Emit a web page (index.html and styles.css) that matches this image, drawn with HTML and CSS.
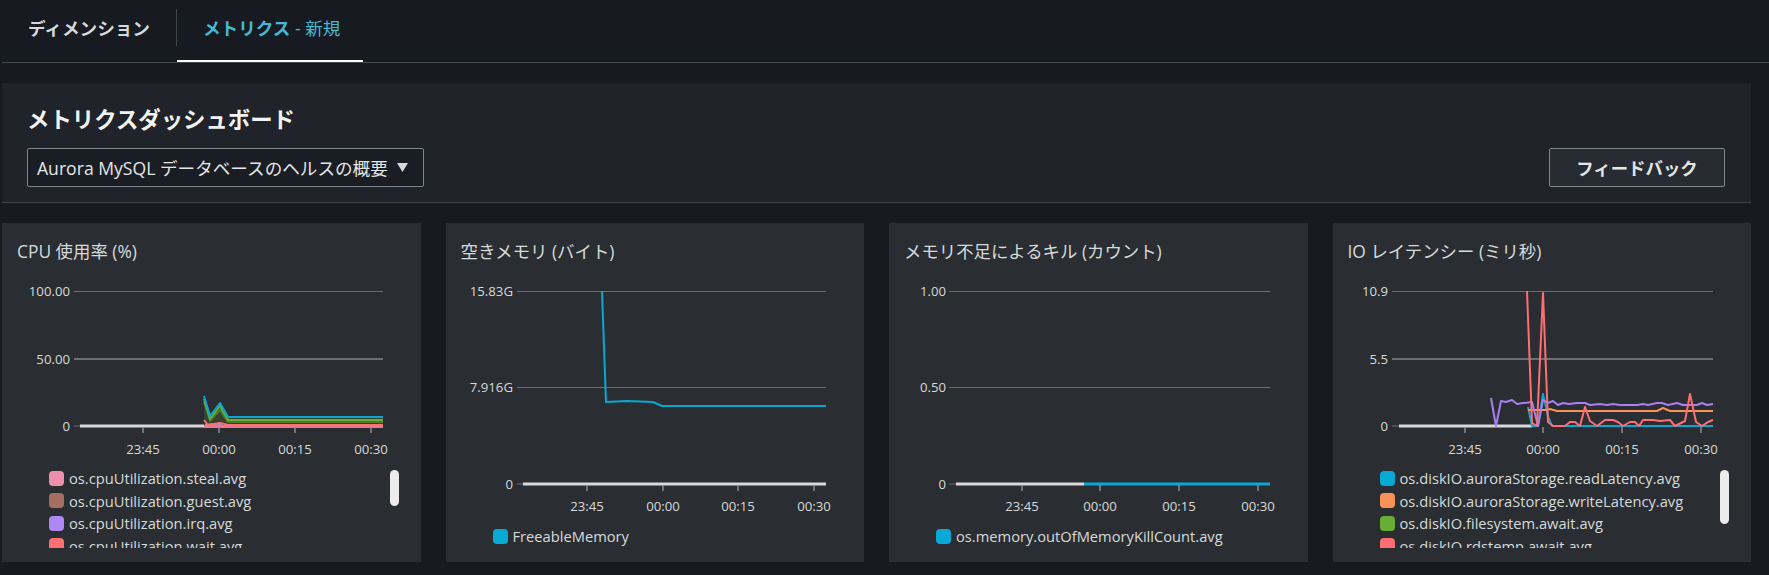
FILE: index.html
```html
<!DOCTYPE html>
<html lang="ja">
<head>
<meta charset="utf-8">
<title>メトリクスダッシュボード</title>
<link rel="stylesheet" href="styles.css">
</head>
<body>
<div class="page">
  <nav class="tabs">
    <div class="tab">ディメンション</div>
    <div class="tab-sep"></div>
    <div class="tab active"><span>メトリクス</span><span class="tab-new">&nbsp;- 新規</span></div>
  </nav>

  <section class="dash-head">
    <h1 class="dash-title">メトリクスダッシュボード</h1>
    <div class="dash-controls">
      <div class="select">
        <span>Aurora MySQL データベースのヘルスの概要</span>
        <svg class="caret" width="11" height="9" viewBox="0 0 11 9"><polygon points="0,0 11,0 5.5,9"/></svg>
      </div>
      <button class="btn">フィードバック</button>
    </div>
  </section>

  <div class="cards">
    <!-- CPU -->
    <div class="card">
      <div class="card-title">CPU 使用率 (%)</div>
      <svg class="chart" width="419" height="203" viewBox="0 0 419 203">
        <line class="grid" x1="72" y1="27.5" x2="381" y2="27.5"/>
        <line class="grid grid-mid" x1="72" y1="95" x2="381" y2="95"/>
        <line class="grid" x1="72" y1="162" x2="78" y2="162"/>
        <g class="ylab">
          <text x="68" y="31.5">100.00</text>
          <text x="68" y="99.5">50.00</text>
          <text x="68" y="166.5">0</text>
        </g>
        <line class="zero" x1="78" y1="162" x2="203" y2="162"/>
        <polygon class="area" points="202,132 208,152 218,139 226,153 381,153 381,162 202,162"/>
        <polyline class="s-green-dark" points="202,138 208,157 218,146 226,158 381,158"/>
        <polyline class="s-green" points="202,135 208,155 218,142 226,156 381,156"/>
        <polyline class="s-blue" points="202,132 208,152 218,139 226,153 381,153"/>
        <polyline class="s-purple" points="203,161 212,160 220,161"/>
        <polyline class="s-red" points="202,156 206,161 218,159 226,161 381,161"/>
        <line class="s-pink" x1="202" y1="162.5" x2="381" y2="162.5"/>
        <g class="ticks">
          <line x1="141" y1="163" x2="141" y2="169"/>
          <line x1="217" y1="163" x2="217" y2="169"/>
          <line x1="293" y1="163" x2="293" y2="169"/>
          <line x1="369" y1="163" x2="369" y2="169"/>
        </g>
        <g class="xlab">
          <text x="141" y="189.5">23:45</text>
          <text x="217" y="189.5">00:00</text>
          <text x="293" y="189.5">00:15</text>
          <text x="369" y="189.5">00:30</text>
        </g>
      </svg>
      <div class="legend-wrap scroll">
        <ul class="legend">
          <li><i class="sw sw-pink"></i>os.cpuUtilization.steal.avg</li>
          <li><i class="sw sw-brown"></i>os.cpuUtilization.guest.avg</li>
          <li><i class="sw sw-purple"></i>os.cpuUtilization.irq.avg</li>
          <li><i class="sw sw-red"></i>os.cpuUtilization.wait.avg</li>
          <li><i class="sw sw-green"></i>os.cpuUtilization.system.avg</li>
        </ul>
        <div class="thumb thumb-cpu"></div>
      </div>
    </div>

    <!-- Freeable memory -->
    <div class="card">
      <div class="card-title">空きメモリ (バイト)</div>
      <svg class="chart" width="418" height="261" viewBox="0 0 418 261">
        <line class="grid" x1="71" y1="27.5" x2="380" y2="27.5"/>
        <line class="grid" x1="71" y1="123.5" x2="380" y2="123.5"/>
        <line class="grid" x1="71" y1="220" x2="77" y2="220"/>
        <g class="ylab">
          <text x="67" y="31.5">15.83G</text>
          <text x="67" y="127.5">7.916G</text>
          <text x="67" y="224.5">0</text>
        </g>
        <line class="zero" x1="77" y1="220" x2="380" y2="220"/>
        <polyline class="s-blue" points="156,27 160,138 181,137 207,138 216,142 380,142"/>
        <g class="ticks">
          <line x1="141" y1="221" x2="141" y2="227"/>
          <line x1="217" y1="221" x2="217" y2="227"/>
          <line x1="292" y1="221" x2="292" y2="227"/>
          <line x1="368" y1="221" x2="368" y2="227"/>
        </g>
        <g class="xlab">
          <text x="141" y="246.5">23:45</text>
          <text x="217" y="246.5">00:00</text>
          <text x="292" y="246.5">00:15</text>
          <text x="368" y="246.5">00:30</text>
        </g>
      </svg>
      <div class="legend-wrap">
        <ul class="legend">
          <li><i class="sw sw-blue"></i>FreeableMemory</li>
        </ul>
      </div>
    </div>

    <!-- OOM kills -->
    <div class="card">
      <div class="card-title">メモリ不足によるキル (カウント)</div>
      <svg class="chart" width="419" height="261" viewBox="0 0 419 261">
        <line class="grid" x1="60" y1="27.5" x2="381" y2="27.5"/>
        <line class="grid" x1="60" y1="123.5" x2="381" y2="123.5"/>
        <line class="grid" x1="60" y1="220" x2="67" y2="220"/>
        <g class="ylab">
          <text x="57" y="31.5">1.00</text>
          <text x="57" y="127.5">0.50</text>
          <text x="57" y="224.5">0</text>
        </g>
        <line class="zero" x1="67" y1="220" x2="195" y2="220"/>
        <line class="s-blue s-thick" x1="195" y1="220" x2="381" y2="220"/>
        <g class="ticks">
          <line x1="133" y1="221" x2="133" y2="227"/>
          <line x1="211" y1="221" x2="211" y2="227"/>
          <line x1="290" y1="221" x2="290" y2="227"/>
          <line x1="369" y1="221" x2="369" y2="227"/>
        </g>
        <g class="xlab">
          <text x="133" y="246.5">23:45</text>
          <text x="211" y="246.5">00:00</text>
          <text x="290" y="246.5">00:15</text>
          <text x="369" y="246.5">00:30</text>
        </g>
      </svg>
      <div class="legend-wrap">
        <ul class="legend">
          <li><i class="sw sw-blue"></i>os.memory.outOfMemoryKillCount.avg</li>
        </ul>
      </div>
    </div>

    <!-- IO latency -->
    <div class="card">
      <div class="card-title">IO レイテンシー (ミリ秒)</div>
      <svg class="chart" width="418" height="203" viewBox="0 0 418 203">
        <line class="grid" x1="59" y1="27.5" x2="380" y2="27.5"/>
        <line class="grid grid-mid" x1="59" y1="95" x2="380" y2="95"/>
        <line class="grid" x1="59" y1="162" x2="66" y2="162"/>
        <g class="ylab">
          <text x="55" y="31.5">10.9</text>
          <text x="55" y="99.5">5.5</text>
          <text x="55" y="166.5">0</text>
        </g>
        <line class="zero" x1="66" y1="162" x2="199" y2="162"/>
        <polyline class="s-blue" points="195,143 199,162 205,162 210,130 215,152 219,162 380,162"/>
        <polyline class="s-orange" points="195,146 214,146 217,145 224,147 324,147 330,144 337,147 380,147"/>
        <polyline class="s-purple" points="158,134 163,162 168,137 173,138 179,136 184,140 190,139 199,138 205,162 210,136 215,139 220,137 225,141 230,139 236,140 244,139 252,139 257,141 267,140 274,141 280,140 287,141 294,141 304,141 310,140 315,141 324,139 329,139 335,141 344,139 350,141 360,141 364,141 369,139 374,141 380,140"/>
        <polyline class="s-red" points="194,27 199,159 204,162 210,29 215,158 220,162 232,162 237,158 242,158 247,162 252,143 257,157 264,162 272,156 280,156 285,158 290,162 297,158 302,158 306,162 310,156 320,156 327,157 337,156 342,162 352,157 357,130 363,158 369,162 375,158 380,156"/>
        <g class="ticks">
          <line x1="132" y1="163" x2="132" y2="169"/>
          <line x1="210" y1="163" x2="210" y2="169"/>
          <line x1="289" y1="163" x2="289" y2="169"/>
          <line x1="368" y1="163" x2="368" y2="169"/>
        </g>
        <g class="xlab">
          <text x="132" y="189.5">23:45</text>
          <text x="210" y="189.5">00:00</text>
          <text x="289" y="189.5">00:15</text>
          <text x="368" y="189.5">00:30</text>
        </g>
      </svg>
      <div class="legend-wrap scroll">
        <ul class="legend">
          <li><i class="sw sw-blue"></i>os.diskIO.auroraStorage.readLatency.avg</li>
          <li><i class="sw sw-orange"></i>os.diskIO.auroraStorage.writeLatency.avg</li>
          <li><i class="sw sw-green"></i>os.diskIO.filesystem.await.avg</li>
          <li><i class="sw sw-red"></i>os.diskIO.rdstemp.await.avg</li>
          <li><i class="sw sw-purple"></i>os.diskIO.auroraStorage.diskQueueDepth.avg</li>
        </ul>
        <div class="thumb thumb-io"></div>
      </div>
    </div>
  </div>
</div>
</body>
</html>
```

FILE: styles.css
```css
* { box-sizing: border-box; }

body {
  margin: 0;
  background: #171a21;
  color: #d5dbdb;
  font-family: "Open Sans", "Noto Sans CJK JP", sans-serif;
}

.page {
  padding-left: 2px;
}

/* Tabs */
.tabs {
  display: flex;
  height: 63px;
  border-bottom: 1px solid #414750;
}
.tab {
  display: flex;
  align-items: center;
  padding: 0 26px 6px;
  font-size: 17.6px;
  font-weight: 700;
  color: #d5dbdb;
  border-bottom: 2px solid transparent;
  white-space: nowrap;
}
.tab.active {
  color: #44b9d6;
  border-bottom-color: #ffffff;
  padding-right: 23px;
}
.tab-new { font-weight: 400; }
.tab-sep {
  width: 1px;
  height: 37px;
  margin-top: 9px;
  background: #414750;
}

/* Dashboard header */
.dash-head {
  width: 1749px;
  margin-top: 20px;
  background: #20232a;
  border-bottom: 1px solid #3e434b;
  padding: 23px 26px 15px 25px;
}
.dash-title {
  margin: 0;
  font-size: 22.4px;
  line-height: 27px;
  font-weight: 700;
  color: #f2f3f3;
  white-space: nowrap;
}
.dash-controls {
  display: flex;
  justify-content: space-between;
  margin-top: 15px;
}
.select {
  width: 397px;
  height: 39px;
  border: 1px solid #7d8691;
  border-radius: 2px;
  background: #1a1d23;
  display: flex;
  align-items: center;
  justify-content: space-between;
  padding: 0 15px 0 9px;
  font-size: 17.6px;
  color: #e3e6e6;
  white-space: nowrap;
}
.caret { fill: #d5dbdb; display: block; flex: none; }
.btn {
  width: 176px;
  height: 39px;
  border: 1px solid #7d8691;
  border-radius: 2px;
  background: #282c32;
  color: #e3e6e6;
  font-family: inherit;
  font-size: 17.4px;
  font-weight: 700;
  padding: 0;
}

/* Cards */
.cards {
  width: 1749px;
  display: grid;
  grid-template-columns: repeat(4, 1fr);
  gap: 25px;
  margin-top: 20px;
  height: 339px;
}
.card {
  background: #2a2d32;
  overflow: hidden;
}
.card-title {
  padding: 15px 15px 0;
  font-size: 17.4px;
  line-height: 26px;
  color: #d5dbdb;
  white-space: nowrap;
}
.chart { display: block; }

.chart .grid { stroke: #6b6e72; stroke-width: 1; }
.chart .grid-mid { stroke-width: 2; }
.chart .zero { stroke: #d9d9d9; stroke-width: 3; }
.chart .ticks line { stroke: #8a8d91; stroke-width: 1.5; }
.chart text {
  font-family: "Open Sans", sans-serif;
  font-size: 13.2px;
  fill: #d5dbdb;
}
.chart .ylab text { text-anchor: end; }
.chart .xlab text { text-anchor: middle; }

.chart polyline, .chart .s-blue, .chart .s-pink {
  fill: none;
  stroke-width: 2;
  stroke-linejoin: round;
}
.chart .area { fill: #37412f; stroke: none; }
.chart .s-blue { stroke: #0aa8d1; }
.chart .s-thick { stroke-width: 3; }
.chart .s-green { stroke: #6aaf35; }
.chart .s-green-dark { stroke: #4f7a2f; }
.chart .s-purple { stroke: #a97ff0; }
.chart .s-red { stroke: #fe6e73; }
.chart .s-orange { stroke: #f89256; }
.chart .s-pink { stroke: #e8788f; stroke-width: 3; }

/* Legend */
.legend-wrap { position: relative; }
.legend-wrap.scroll { height: 81px; overflow: hidden; }
.legend {
  list-style: none;
  margin: 0;
  padding: 0 0 0 47px;
}
.legend li {
  display: flex;
  align-items: center;
  height: 22.5px;
  font-size: 14.7px;
  white-space: nowrap;
  color: #d5dbdb;
}
.sw {
  flex: none;
  width: 15px;
  height: 15px;
  border-radius: 4px;
  margin-right: 5px;
}
.sw-pink { background: #ee8fac; }
.sw-brown { background: #a46e61; }
.sw-purple { background: #b088f5; }
.sw-red { background: #fe6e73; }
.sw-blue { background: #08a9d2; }
.sw-orange { background: #f89256; }
.sw-green { background: #69ae34; }

.thumb {
  position: absolute;
  top: 3px;
  width: 9px;
  border-radius: 5px;
  background: #ececec;
}
.thumb-cpu { left: 388px; height: 36px; }
.thumb-io { left: 387px; height: 54px; }
```
